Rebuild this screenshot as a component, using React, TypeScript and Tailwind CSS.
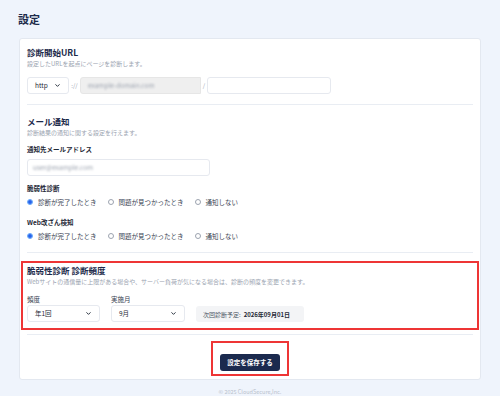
import { ChevronDown } from "lucide-react";

const font = { fontFamily: '"Noto Sans CJK JP", "Noto Sans", sans-serif' };

function Select({ value, width }: { value: string; width: string }) {
  return (
    <div
      className={`flex items-center justify-between h-[17px] ${width} pl-[7px] pr-[7px] bg-white border border-[#e6e9ef] rounded-[3px]`}
    >
      <span className="text-[6.5px] leading-none text-[#1f2937]">{value}</span>
      <ChevronDown className="w-[7px] h-[7px] text-[#1f2937]" strokeWidth={3.2} />
    </div>
  );
}

function Radio({ label, checked }: { label: string; checked?: boolean }) {
  return (
    <label className="flex items-center gap-[5px]">
      {checked ? (
        <span className="flex items-center justify-center w-[6px] h-[6px] rounded-full border border-[#60a5fa] bg-[#dbeafe]">
          <span className="w-[3.5px] h-[3.5px] rounded-full bg-[#2563eb]" />
        </span>
      ) : (
        <span className="w-[6px] h-[6px] rounded-full border border-[#9ca3af] bg-white" />
      )}
      <span className="text-[6.5px] leading-[10px] text-[#374151]">{label}</span>
    </label>
  );
}

function RadioRow() {
  return (
    <div className="flex items-center gap-[11px] mt-[3.5px]">
      <Radio label="診断が完了したとき" checked />
      <Radio label="問題が見つかったとき" />
      <Radio label="通知しない" />
    </div>
  );
}

export default function App() {
  return (
    <div className="w-[500px] h-[396px] bg-[#eff4fc] overflow-hidden" style={font}>
      <div className="pl-[18px] pt-[11px]">
        <h1 className="text-[11px] leading-[16px] font-bold text-[#1c2a4a]">設定</h1>
      </div>

      <div className="ml-[19px] mt-[11px] w-[462px] bg-white border border-[#e3e8f0] rounded-[3px] pb-[3px]">
        {/* 診断開始URL */}
        <div className="px-[7px] pt-[6px]">
          <h2 className="text-[8.5px] leading-[14px] font-bold text-[#1c2a4a]">診断開始URL</h2>
          <p className="text-[6px] leading-[10px] text-[#9aa3b0]">
            設定したURLを起点にページを診断します。
          </p>
          <div className="flex items-center mt-[8px]">
            <Select value="http" width="w-[42px]" />
            <span className="w-[11px] text-center text-[6px] text-[#9aa3b0]">://</span>
            <div className="flex items-center w-[121px] h-[17px] bg-[#efefef] border border-[#e6e6e6] rounded-l-[3px] pl-[7px]">
              <span className="text-[6.5px] text-[#9ca3af] blur-[1.2px]">example-domain.com</span>
            </div>
            <span className="w-[6px] text-center text-[6px] text-[#9aa3b0]">/</span>
            <div className="w-[124px] h-[17px] bg-white border border-[#e6e9ef] rounded-[3px]" />
          </div>
          <div className="mt-[10px] border-t border-[#e9edf3]" />
        </div>

        {/* メール通知 */}
        <div className="px-[7px]">
          <h2 className="mt-[9px] text-[8.5px] leading-[14px] font-bold text-[#1c2a4a]">メール通知</h2>
          <p className="text-[6px] leading-[10px] text-[#9aa3b0]">
            診断結果の通知に関する設定を行えます。
          </p>
          <p className="mt-[6px] text-[6.5px] leading-[11px] font-bold text-[#1f2937]">
            通知先メールアドレス
          </p>
          <div className="flex items-center mt-[4px] w-[183px] h-[17px] bg-white border border-[#e6e9ef] rounded-[3px] pl-[5px]">
            <span className="text-[6.5px] text-[#9ca3af] blur-[1.2px]">user@example.com</span>
          </div>
          <p className="mt-[6.5px] text-[6.5px] leading-[11px] font-bold text-[#1f2937]">脆弱性診断</p>
          <RadioRow />
          <p className="mt-[9.5px] text-[6.5px] leading-[11px] font-bold text-[#1f2937]">Web改ざん検知</p>
          <RadioRow />
          <div className="mt-[11px] border-t border-[#e9edf3]" />
        </div>

        {/* 診断頻度 */}
        <div className="ml-[1px] mr-[1px] mt-[8px] border-2 border-[#ee3535] px-[4px] pb-[6px]">
          <h2 className="text-[8.5px] leading-[14px] font-bold text-[#1c2a4a]">脆弱性診断 診断頻度</h2>
          <p className="text-[6px] leading-[10px] text-[#9aa3b0]">
            Webサイトの通信量に上限がある場合や、サーバー負荷が気になる場合は、診断の頻度を変更できます。
          </p>
          <div className="flex items-end gap-[11px] mt-[7px]">
            <div>
              <p className="text-[6.5px] leading-[10px] text-[#374151]">頻度</p>
              <div className="mt-[1px]">
                <Select value="年1回" width="w-[73px]" />
              </div>
            </div>
            <div>
              <p className="text-[6.5px] leading-[10px] text-[#374151]">実施月</p>
              <div className="mt-[1px]">
                <Select value="9月" width="w-[74px]" />
              </div>
            </div>
            <div className="flex items-center w-[108px] h-[16px] pl-[7px] bg-[#f3f4f6] rounded-[3px]">
              <span className="text-[6px] text-[#4b5563]">次回診断予定:</span>
              <span className="ml-[3px] text-[6px] font-bold text-[#1f2937]">2026年09月01日</span>
            </div>
          </div>
        </div>
        <div className="mx-[7px] mt-[4px] border-t border-[#e9edf3]" />

        {/* 保存 */}
        <div className="flex justify-center mt-[6px]">
          <div className="border-2 border-[#ee3535] px-[7px] py-[3px]">
            <button className="h-[17px] px-[7px] bg-[#1b2a4e] rounded-[3px] text-[6.5px] font-bold text-white">
              設定を保存する
            </button>
          </div>
        </div>
      </div>

      <p className="mt-[7px] text-center text-[5.5px] leading-[10px] text-[#b9c1cd]">
        © 2025 CloudSecure,Inc.
      </p>
    </div>
  );
}
